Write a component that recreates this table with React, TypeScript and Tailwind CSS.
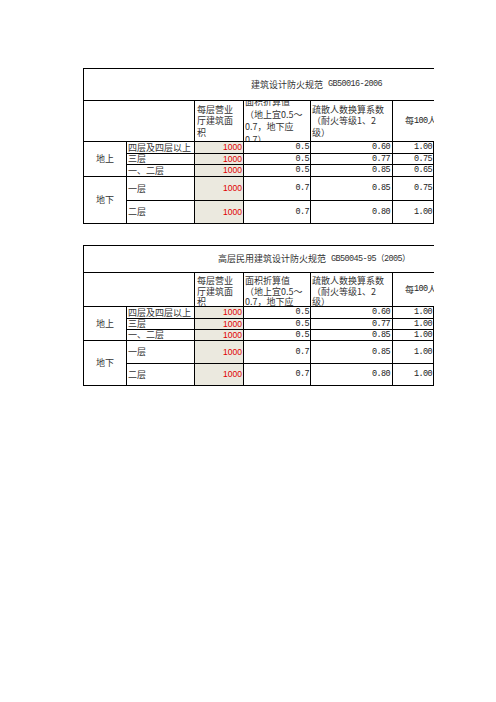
const cjk = "font-['Noto_Sans_CJK_SC',sans-serif] text-[9px] text-[#333]"
const mono = "font-['Liberation_Mono','Noto_Sans_CJK_SC',monospace] text-[8.5px] tracking-[-0.6px] text-[#222]"
const red = "font-['Liberation_Sans',sans-serif] text-[8.5px] text-[#e00000]"

type Row = { name: string; area: string; factor: string; coef: string; per: string }

const groupUp = ['四层及四层以上', '三层', '一、二层']
const groupDown = ['一层', '二层']

function Num({ children, className = '' }: { children: string; className?: string }) {
  return <span className={`${mono} ${className}`}>{children}</span>
}

function FireTable({
  title,
  titlePad,
  code,
  rows,
  rowsClass,
  tall,
}: {
  title: string
  titlePad: string
  code: string
  rows: Row[]
  rowsClass: string
  tall: boolean
}) {
  const head = tall
    ? 'flex flex-col justify-center leading-[11.5px]'
    : 'flex flex-col justify-start pt-[3px] leading-[10.5px]'

  return (
    <div className={`grid w-[351px] grid-cols-[43px_68px_49px_67px_82px_41px] border-l border-t border-black ${rowsClass}`}>
      {/* title */}
      <div className={`col-span-6 flex items-center border-b border-black ${titlePad} whitespace-nowrap`}>
        <span className={cjk}>{title}</span>
        <span className={`${mono} ml-[5px] text-[#333]`}>{code}</span>
      </div>

      {/* header */}
      <div className="col-span-2 border-b border-r border-black" />
      <div className={`${head} overflow-hidden border-b border-r border-black pl-[2px] ${cjk}`}>
        <span>每层营业</span>
        <span>厅建筑面</span>
        <span>积</span>
      </div>
      <div className={`${tall ? 'flex flex-col justify-center leading-[12.5px]' : head} overflow-hidden border-b border-r border-black pl-[1px] ${cjk}`}>
        <span className="whitespace-nowrap">面积折算值</span>
        <span className="whitespace-nowrap">（地上宜0.5～</span>
        <span className="whitespace-nowrap">0.7，地下应</span>
        <span className="whitespace-nowrap">0.7）</span>
      </div>
      <div className={`${head} overflow-hidden border-b border-r border-black pl-[1px] ${cjk}`}>
        <span className="whitespace-nowrap">疏散人数换算系数</span>
        <span className="whitespace-nowrap">（耐火等级1、2</span>
        <span>级）</span>
      </div>
      <div className="flex items-center overflow-hidden whitespace-nowrap border-b border-black pl-[12px]">
        <span className={cjk}>每</span>
        <Num>100</Num>
        <span className={cjk}>人</span>
      </div>

      {/* body */}
      {rows.map((r, i) => (
        <Body key={r.name + i} row={r} index={i} />
      ))}
    </div>
  )
}

function Body({ row, index }: { row: Row; index: number }) {
  const cell = 'flex items-center border-b border-r border-black overflow-hidden'
  return (
    <>
      {index === 0 && (
        <div className={`row-span-3 justify-center ${cell} ${cjk}`}>地上</div>
      )}
      {index === 3 && (
        <div className={`row-span-2 justify-center ${cell} ${cjk}`}>地下</div>
      )}
      <div className={`${cell} whitespace-nowrap pl-[1px] ${cjk}`}>{row.name}</div>
      <div className={`${cell} justify-end bg-[#ebe9df] pr-[1px]`}>
        <span className={red}>{row.area}</span>
      </div>
      <div className={`${cell} justify-end pr-[1px]`}>
        <Num>{row.factor}</Num>
      </div>
      <div className={`${cell} justify-end pr-[2px]`}>
        <Num>{row.coef}</Num>
      </div>
      <div className={`${cell} justify-end pr-[1px]`}>
        <Num>{row.per}</Num>
      </div>
    </>
  )
}

function makeRows(coef: string[], per: string[]): Row[] {
  return [...groupUp, ...groupDown].map((name, i) => ({
    name,
    area: '1000',
    factor: i < 3 ? '0.5' : '0.7',
    coef: coef[i],
    per: per[i],
  }))
}

export default function App() {
  const coef = ['0.60', '0.77', '0.85', '0.85', '0.80']

  return (
    <div className="min-h-[702px] w-[496px] overflow-hidden bg-white pl-[83px] pt-[68px]">
      <FireTable
        title="建筑设计防火规范"
        titlePad="pl-[167px]"
        code="GB50016-2006"
        rows={makeRows(coef, ['1.00', '0.75', '0.65', '0.75', '1.00'])}
        rowsClass="grid-rows-[32px_41px_12px_11px_12px_24px_23px]"
        tall
      />
      <div className="mt-[21px]">
        <FireTable
          title="高层民用建筑设计防火规范"
          titlePad="pl-[134px]"
          code="GB50045-95（2005）"
          rows={makeRows(coef, ['1.00', '1.00', '1.00', '1.00', '1.00'])}
          rowsClass="grid-rows-[27px_34px_12px_11px_11px_23px_22px]"
          tall={false}
        />
      </div>
    </div>
  )
}
